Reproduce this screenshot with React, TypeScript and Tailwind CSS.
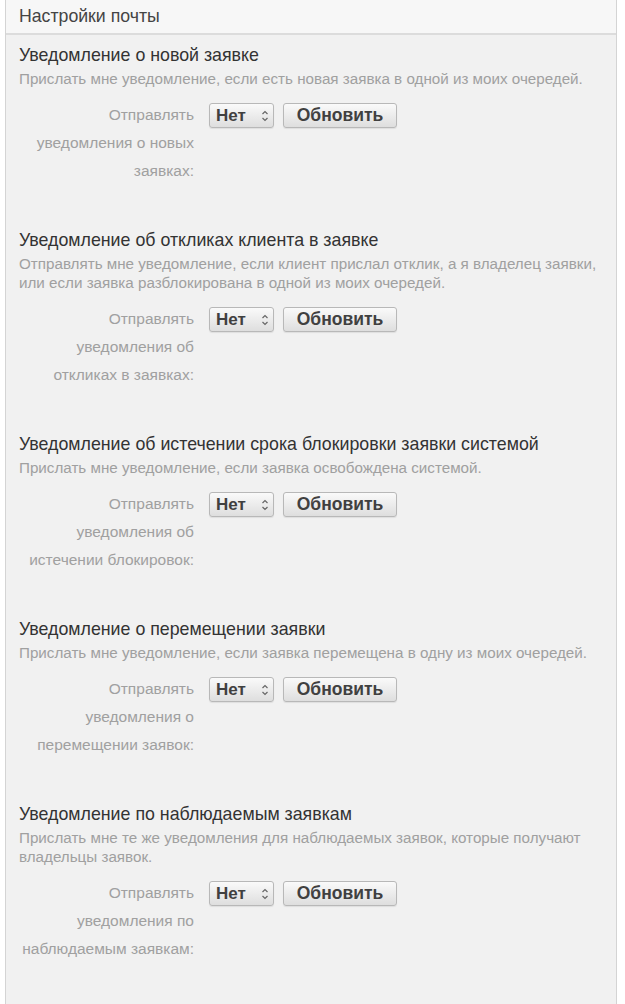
import React from 'react';

interface Section {
  title: string;
  desc: string[];
  label: string[];
}

const sections: Section[] = [
  {
    title: 'Уведомление о новой заявке',
    desc: ['Прислать мне уведомление, если есть новая заявка в одной из моих очередей.'],
    label: ['Отправлять', 'уведомления о новых', 'заявках:'],
  },
  {
    title: 'Уведомление об откликах клиента в заявке',
    desc: [
      'Отправлять мне уведомление, если клиент прислал отклик, а я владелец заявки,',
      'или если заявка разблокирована в одной из моих очередей.',
    ],
    label: ['Отправлять', 'уведомления об', 'откликах в заявках:'],
  },
  {
    title: 'Уведомление об истечении срока блокировки заявки системой',
    desc: ['Прислать мне уведомление, если заявка освобождена системой.'],
    label: ['Отправлять', 'уведомления об', 'истечении блокировок:'],
  },
  {
    title: 'Уведомление о перемещении заявки',
    desc: ['Прислать мне уведомление, если заявка перемещена в одну из моих очередей.'],
    label: ['Отправлять', 'уведомления о', 'перемещении заявок:'],
  },
  {
    title: 'Уведомление по наблюдаемым заявкам',
    desc: [
      'Прислать мне те же уведомления для наблюдаемых заявок, которые получают',
      'владельцы заявок.',
    ],
    label: ['Отправлять', 'уведомления по', 'наблюдаемым заявкам:'],
  },
];

function SelectBox() {
  return (
    <div className="flex h-[25px] w-[65px] items-center justify-between rounded-[3px] border border-[#b8b8b8] bg-gradient-to-b from-[#fafafa] to-[#dedede] pl-[6px] pr-[4px] shadow-[0_1px_1px_rgba(0,0,0,0.08)]">
      <span className="text-[17px] font-bold leading-none text-[#404040]">Нет</span>
      <svg width="8" height="14" viewBox="0 0 8 14" className="text-[#666]">
        <path d="M1.5 5 L4 2.5 L6.5 5" fill="none" stroke="currentColor" strokeWidth="1.2" />
        <path d="M1.5 9 L4 11.5 L6.5 9" fill="none" stroke="currentColor" strokeWidth="1.2" />
      </svg>
    </div>
  );
}

function UpdateButton() {
  return (
    <button className="flex h-[25px] w-[114px] items-center justify-center rounded-[3px] border border-[#b8b8b8] bg-gradient-to-b from-[#fafafa] to-[#dedede] text-[17.5px] font-bold leading-none text-[#404040] shadow-[0_1px_1px_rgba(0,0,0,0.08)]">
      Обновить
    </button>
  );
}

export default function App() {
  return (
    <div className="min-h-[1004px] bg-white font-['Liberation_Sans',Arial,sans-serif]">
      <div className="ml-[5px] min-h-[1004px] w-[612px] border-x border-[#d4d4d4] bg-[#f1f1f1]">
        <div className="flex h-[35px] items-center border-b-2 border-[#dcdcdc] bg-[#f7f7f7] pl-[13px] text-[17.7px] text-[#444]">
          Настройки почты
        </div>
        <div className="pl-[13px] pt-[8px]">
          {sections.map((s) => (
            <div key={s.title} className="mb-[43px]">
              <div className="text-[17.8px] leading-[24px] text-[#333]">{s.title}</div>
              <div className="mt-[2px] text-[15.2px] leading-[19px] text-[#a0a0a0]">
                {s.desc.map((d) => (
                  <div key={d}>{d}</div>
                ))}
              </div>
              <div className="mt-[13px] flex items-start">
                <div className="w-[175px] text-right text-[15.5px] leading-[28px] text-[#a0a0a0]">
                  {s.label.map((l) => (
                    <div key={l}>{l}</div>
                  ))}
                </div>
                <div className="ml-[15px] mt-[2px] flex gap-[9px]">
                  <SelectBox />
                  <UpdateButton />
                </div>
              </div>
            </div>
          ))}
        </div>
      </div>
    </div>
  );
}
